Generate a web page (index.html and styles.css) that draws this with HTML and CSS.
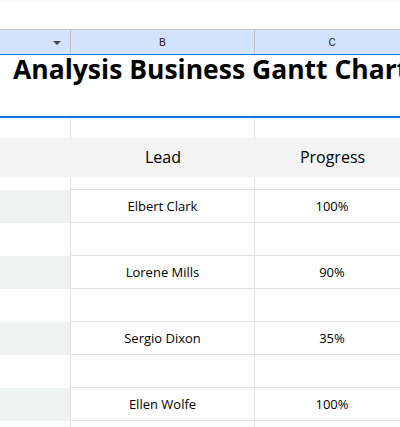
FILE: index.html
```html
<!DOCTYPE html>
<html>
    <head>
        <link rel="stylesheet" href="styles.css">
    </head>
    <body>
        <div class="topbar"></div>
        <div class="sheet">
            <div class="colheads">
                <div class="colhead col-a"><span class="drop"></span></div>
                <div class="colhead col-b">B</div>
                <div class="colhead col-c">C</div>
            </div>
            <div class="title">Analysis Business Gantt Chart</div>
            <div class="row blank">
                <div class="cell a"></div>
                <div class="cell b"></div>
                <div class="cell c"></div>
            </div>
            <div class="row head">
                <div class="cell a"></div>
                <div class="cell b">Lead</div>
                <div class="cell c">Progress</div>
            </div>
            <div class="row gap">
                <div class="cell a"></div>
                <div class="cell b"></div>
                <div class="cell c"></div>
            </div>
            <div class="row data">
                <div class="cell a"></div>
                <div class="cell b">Elbert Clark</div>
                <div class="cell c">100%</div>
            </div>
            <div class="row spacer">
                <div class="cell a"></div>
                <div class="cell b"></div>
                <div class="cell c"></div>
            </div>
            <div class="row data">
                <div class="cell a"></div>
                <div class="cell b">Lorene Mills</div>
                <div class="cell c">90%</div>
            </div>
            <div class="row spacer">
                <div class="cell a"></div>
                <div class="cell b"></div>
                <div class="cell c"></div>
            </div>
            <div class="row data">
                <div class="cell a"></div>
                <div class="cell b">Sergio Dixon</div>
                <div class="cell c">35%</div>
            </div>
            <div class="row spacer">
                <div class="cell a"></div>
                <div class="cell b"></div>
                <div class="cell c"></div>
            </div>
            <div class="row data">
                <div class="cell a"></div>
                <div class="cell b">Ellen Wolfe</div>
                <div class="cell c">100%</div>
            </div>
            <div class="row spacer">
                <div class="cell a"></div>
                <div class="cell b"></div>
                <div class="cell c"></div>
            </div>
        </div>
    </body>
</html>
```

FILE: styles.css
```css
html, body {
    margin: 0;
    padding: 0;
    background: #ffffff;
    overflow: hidden;
}
body {
    width: 400px;
    height: 427px;
    font-family: "Open Sans", sans-serif;
    color: #000000;
}
.topbar {
    height: 3px;
    background: #f8f9fa;
    margin-bottom: 26px;
}
.sheet {
    width: 410px;
    height: 398px;
    overflow: hidden;
}
.colheads {
    display: grid;
    grid-template-columns: 71px 184px 155px;
    height: 24px;
    border-top: 1px solid #c7c7c7;
    border-bottom: 1px solid #1a73e8;
    background: #d3e3fd;
}
.colhead {
    display: flex;
    align-items: center;
    justify-content: center;
    border-right: 1px solid #c0c0c0;
    font-family: "Roboto", "Liberation Sans", sans-serif;
    font-size: 11px;
    color: #1f1f1f;
    padding-top: 1px;
}
.colhead.col-a {
    justify-content: flex-end;
    padding-right: 9px;
}
.drop {
    width: 0;
    height: 0;
    border-left: 4px solid transparent;
    border-right: 4px solid transparent;
    border-top: 4px solid #444746;
}
.title {
    height: 61px;
    border-bottom: 2px solid #1a73e8;
    padding-left: 13px;
    font-size: 26.5px;
    font-weight: 700;
    line-height: 29px;
    white-space: nowrap;
}
.row {
    display: grid;
    grid-template-columns: 71px 184px 155px;
}
.cell {
    display: flex;
    align-items: center;
    justify-content: center;
    border-right: 1px solid #e1e1e1;
    font-size: 13px;
}
.row.blank {
    height: 20px;
}
.row.head {
    height: 39px;
    background: #f3f3f3;
}
.row.head .cell {
    border-right: none;
    font-size: 16px;
    padding-bottom: 2px;
}
.row.gap {
    height: 13px;
}
.row.gap .cell.b,
.row.gap .cell.c,
.row.data .cell.b,
.row.data .cell.c,
.row.spacer .cell.b,
.row.spacer .cell.c {
    border-bottom: 1px solid #e1e1e1;
}
.row.data,
.row.spacer {
    height: 33px;
}
.row.data .cell.a {
    background: #eef2f1;
}
```
